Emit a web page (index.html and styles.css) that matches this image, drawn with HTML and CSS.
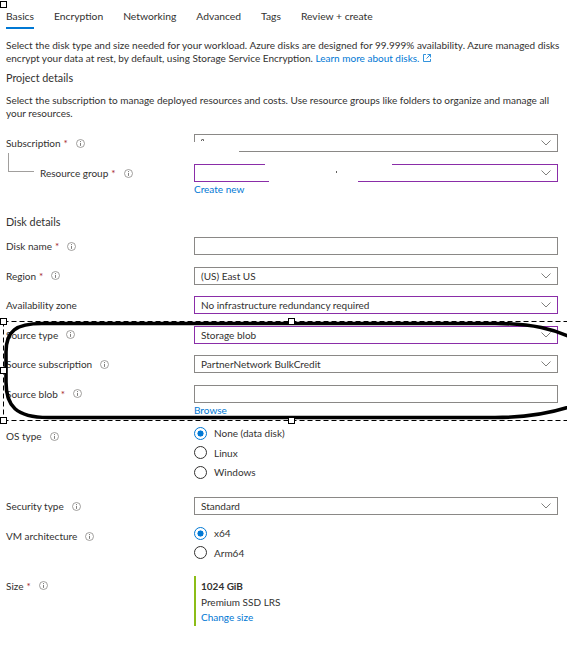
FILE: index.html
```html
<!DOCTYPE html>
<html lang="en">
<head>
<meta charset="utf-8">
<title>Create a managed disk</title>
<link rel="stylesheet" href="styles.css">
</head>
<body>
<div class="corner-handle"></div>
<main class="page">
  <nav class="tabs">
    <span class="tab active">Basics</span>
    <span class="tab">Encryption</span>
    <span class="tab">Networking</span>
    <span class="tab">Advanced</span>
    <span class="tab">Tags</span>
    <span class="tab">Review + create</span>
  </nav>

  <p class="desc first">Select the disk type and size needed for your workload. Azure disks are designed for 99.999% availability. Azure managed disks encrypt your data at rest, by default, using Storage Service Encryption. <a class="link" href="#">Learn more about disks. <svg class="ext" width="8" height="8" viewBox="0 0 8 8"><path d="M3 0.5H0.5V7.5H7.5V5M4.5 0.5H7.5V3.5M7.5 0.5L3.5 4.5" fill="none" stroke="#0078d4" stroke-width="0.8"/></svg></a></p>

  <h2 class="section">Project details</h2>
  <p class="desc second">Select the subscription to manage deployed resources and costs. Use resource groups like folders to organize and manage all your resources.</p>

  <div class="row row-sub">
    <div class="label">Subscription<span class="req">*</span><svg class="info" width="9" height="9" viewBox="0 0 9 9"><circle cx="4.5" cy="4.5" r="4" fill="none" stroke="#8a8886" stroke-width="0.8"/><path d="M4.5 3.9V6.9" stroke="#605e5c" stroke-width="0.8"/><circle cx="4.5" cy="2.6" r="0.5" fill="#605e5c"/></svg></div>
    <div class="field">
      <div class="select">
        <span class="value"></span>
        <svg class="chev" width="10" height="6" viewBox="0 0 10 6"><path d="M0.5 0.5L5 5L9.5 0.5" fill="none" stroke="#605e5c" stroke-width="0.8"/></svg>
        <span class="redact sub-a"></span>
        <span class="glyph-mark"></span>
      </div>
    </div>
  </div>

  <div class="row row-rg">
    <div class="label nested">Resource group<span class="req">*</span><svg class="info" width="9" height="9" viewBox="0 0 9 9"><circle cx="4.5" cy="4.5" r="4" fill="none" stroke="#8a8886" stroke-width="0.8"/><path d="M4.5 3.9V6.9" stroke="#605e5c" stroke-width="0.8"/><circle cx="4.5" cy="2.6" r="0.5" fill="#605e5c"/></svg></div>
    <div class="field">
      <div class="select focus">
        <span class="value"></span>
        <svg class="chev" width="10" height="6" viewBox="0 0 10 6"><path d="M0.5 0.5L5 5L9.5 0.5" fill="none" stroke="#605e5c" stroke-width="0.8"/></svg>
        <span class="redact rg-top"></span>
        <span class="redact rg-bottom"></span>
        <span class="rg-dot"></span>
      </div>
      <a class="link below" href="#">Create new</a>
    </div>
  </div>

  <h2 class="section disk">Disk details</h2>

  <div class="row row-first">
    <div class="label">Disk name<span class="req">*</span><svg class="info" width="9" height="9" viewBox="0 0 9 9"><circle cx="4.5" cy="4.5" r="4" fill="none" stroke="#8a8886" stroke-width="0.8"/><path d="M4.5 3.9V6.9" stroke="#605e5c" stroke-width="0.8"/><circle cx="4.5" cy="2.6" r="0.5" fill="#605e5c"/></svg></div>
    <div class="field"><div class="input"></div></div>
  </div>

  <div class="row">
    <div class="label">Region<span class="req">*</span><svg class="info" width="9" height="9" viewBox="0 0 9 9"><circle cx="4.5" cy="4.5" r="4" fill="none" stroke="#8a8886" stroke-width="0.8"/><path d="M4.5 3.9V6.9" stroke="#605e5c" stroke-width="0.8"/><circle cx="4.5" cy="2.6" r="0.5" fill="#605e5c"/></svg></div>
    <div class="field"><div class="select"><span class="value">(US) East US</span><svg class="chev" width="10" height="6" viewBox="0 0 10 6"><path d="M0.5 0.5L5 5L9.5 0.5" fill="none" stroke="#605e5c" stroke-width="0.8"/></svg></div></div>
  </div>

  <div class="row">
    <div class="label">Availability zone</div>
    <div class="field"><div class="select focus"><span class="value">No infrastructure redundancy required</span><svg class="chev" width="10" height="6" viewBox="0 0 10 6"><path d="M0.5 0.5L5 5L9.5 0.5" fill="none" stroke="#605e5c" stroke-width="0.8"/></svg></div></div>
  </div>

  <div class="row">
    <div class="label">Source type<svg class="info" width="9" height="9" viewBox="0 0 9 9"><circle cx="4.5" cy="4.5" r="4" fill="none" stroke="#8a8886" stroke-width="0.8"/><path d="M4.5 3.9V6.9" stroke="#605e5c" stroke-width="0.8"/><circle cx="4.5" cy="2.6" r="0.5" fill="#605e5c"/></svg></div>
    <div class="field"><div class="select focus"><span class="value">Storage blob</span><svg class="chev" width="10" height="6" viewBox="0 0 10 6"><path d="M0.5 0.5L5 5L9.5 0.5" fill="none" stroke="#605e5c" stroke-width="0.8"/></svg></div></div>
  </div>

  <div class="row">
    <div class="label">Source subscription<svg class="info" width="9" height="9" viewBox="0 0 9 9"><circle cx="4.5" cy="4.5" r="4" fill="none" stroke="#8a8886" stroke-width="0.8"/><path d="M4.5 3.9V6.9" stroke="#605e5c" stroke-width="0.8"/><circle cx="4.5" cy="2.6" r="0.5" fill="#605e5c"/></svg></div>
    <div class="field"><div class="select"><span class="value">PartnerNetwork BulkCredit</span><svg class="chev" width="10" height="6" viewBox="0 0 10 6"><path d="M0.5 0.5L5 5L9.5 0.5" fill="none" stroke="#605e5c" stroke-width="0.8"/></svg></div></div>
  </div>

  <div class="row">
    <div class="label">Source blob<span class="req">*</span><svg class="info" width="9" height="9" viewBox="0 0 9 9"><circle cx="4.5" cy="4.5" r="4" fill="none" stroke="#8a8886" stroke-width="0.8"/><path d="M4.5 3.9V6.9" stroke="#605e5c" stroke-width="0.8"/><circle cx="4.5" cy="2.6" r="0.5" fill="#605e5c"/></svg></div>
    <div class="field"><div class="input"></div><a class="link below" href="#">Browse</a></div>
  </div>

  <div class="row row-radio os">
    <div class="label top">OS type<svg class="info" width="9" height="9" viewBox="0 0 9 9"><circle cx="4.5" cy="4.5" r="4" fill="none" stroke="#8a8886" stroke-width="0.8"/><path d="M4.5 3.9V6.9" stroke="#605e5c" stroke-width="0.8"/><circle cx="4.5" cy="2.6" r="0.5" fill="#605e5c"/></svg></div>
    <div class="field radios">
      <div class="radio checked"><span class="dot"></span>None (data disk)</div>
      <div class="radio"><span class="dot"></span>Linux</div>
      <div class="radio"><span class="dot"></span>Windows</div>
    </div>
  </div>

  <div class="row row-sec">
    <div class="label">Security type<svg class="info" width="9" height="9" viewBox="0 0 9 9"><circle cx="4.5" cy="4.5" r="4" fill="none" stroke="#8a8886" stroke-width="0.8"/><path d="M4.5 3.9V6.9" stroke="#605e5c" stroke-width="0.8"/><circle cx="4.5" cy="2.6" r="0.5" fill="#605e5c"/></svg></div>
    <div class="field"><div class="select"><span class="value">Standard</span><svg class="chev" width="10" height="6" viewBox="0 0 10 6"><path d="M0.5 0.5L5 5L9.5 0.5" fill="none" stroke="#605e5c" stroke-width="0.8"/></svg></div></div>
  </div>

  <div class="row row-radio vm">
    <div class="label top">VM architecture<svg class="info" width="9" height="9" viewBox="0 0 9 9"><circle cx="4.5" cy="4.5" r="4" fill="none" stroke="#8a8886" stroke-width="0.8"/><path d="M4.5 3.9V6.9" stroke="#605e5c" stroke-width="0.8"/><circle cx="4.5" cy="2.6" r="0.5" fill="#605e5c"/></svg></div>
    <div class="field radios">
      <div class="radio checked"><span class="dot"></span>x64</div>
      <div class="radio"><span class="dot"></span>Arm64</div>
    </div>
  </div>

  <div class="row row-size">
    <div class="label top size-label">Size<span class="req">*</span><svg class="info" width="9" height="9" viewBox="0 0 9 9"><circle cx="4.5" cy="4.5" r="4" fill="none" stroke="#8a8886" stroke-width="0.8"/><path d="M4.5 3.9V6.9" stroke="#605e5c" stroke-width="0.8"/><circle cx="4.5" cy="2.6" r="0.5" fill="#605e5c"/></svg></div>
    <div class="field">
      <div class="size-card">
        <div class="size-amount">1024 GiB</div>
        <div class="size-sku">Premium SSD LRS</div>
        <a class="link size-change" href="#">Change size</a>
      </div>
    </div>
  </div>
</main>

<svg class="annotation" width="567" height="646" viewBox="0 0 567 646">
  <g fill="none" stroke="#000" stroke-width="1" stroke-dasharray="5 3">
    <path d="M3.5 321.5H567"/>
    <path d="M3.5 420.5H567"/>
    <path d="M3.5 321.5V420.5"/>
  </g>
  <path d="M580 342 C555 328 530 323.5 495 323.5 L42 323.5 C16 323.5 6 331 6 352 L6 382 C6 406 16 417.5 48 417.5 L495 417.5 C530 417.5 555 413 580 403" fill="none" stroke="#000" stroke-width="3.6"/>
  <g fill="#fff" stroke="#000" stroke-width="1">
    <rect x="0.5" y="318.5" width="6" height="6"/>
    <rect x="288.5" y="318.5" width="6" height="6"/>
    <rect x="0.5" y="367.5" width="6" height="6"/>
    <rect x="0.5" y="417.5" width="6" height="6"/>
    <rect x="288.5" y="417.5" width="6" height="6"/>
  </g>
</svg>
</body>
</html>
```

FILE: styles.css
```css
* { box-sizing: border-box; }

html, body {
  margin: 0;
  padding: 0;
}

body {
  position: relative;
  width: 567px;
  height: 646px;
  overflow: hidden;
  background: #fff;
  color: #323130;
  font-family: Lato, "Open Sans", "DejaVu Sans", sans-serif;
  font-size: 10px;
}

.corner-handle {
  position: absolute;
  left: 0;
  top: 1px;
  width: 7px;
  height: 7px;
  border: 1px solid #000;
  background: #fff;
}

.page {
  padding: 0 3px 0 6px;
}

/* tabs */
.tabs {
  display: flex;
  gap: 20px;
  height: 29px;
  font-size: 10.3px;
}

.tab {
  padding-top: 9px;
  padding-bottom: 4px;
  line-height: 14px;
  border-bottom: 2px solid transparent;
  white-space: nowrap;
}

.tab.active {
  border-bottom-color: #0078d4;
}

/* text */
.desc {
  margin: 0;
  line-height: 13px;
}

.desc.first { margin-top: 9.5px; }
.desc.second {
  margin-top: 7.5px;
  max-width: 552px;
}

.section {
  margin: 5.5px 0 0;
  font-size: 10.8px;
  font-weight: 400;
  line-height: 16px;
}

.section.disk { margin-top: 16.5px; }

.link {
  color: #0078d4;
  text-decoration: none;
}

.ext {
  vertical-align: -0.5px;
  margin-left: 1px;
}

/* rows */
.row {
  display: grid;
  grid-template-columns: 188px 364px;
  align-items: start;
  margin-top: 11.6px;
}

.row-sub { margin-top: 14.5px; }
.row-rg { margin-top: 12px; }
.row-first { margin-top: 7.5px; }
.row-radio.os { margin-top: 5.5px; }
.row-sec { margin-top: 15.3px; }
.row-radio.vm { margin-top: 8.2px; }
.row-size { margin-top: 13.2px; }

.label {
  position: relative;
  display: flex;
  align-items: center;
  height: 18px;
  white-space: nowrap;
}

.label.top {
  height: 16px;
  margin-top: 4.8px;
}

.label.size-label { margin-top: 2px; }

.req {
  color: #a4262c;
  margin-left: 3px;
}

.info {
  margin-left: 8px;
  flex: none;
}

.label.nested {
  padding-left: 34px;
}

.label.nested::before {
  content: "";
  position: absolute;
  left: 2px;
  top: -11px;
  width: 25px;
  height: 18px;
  border-left: 1px solid #a19f9d;
  border-bottom: 1px solid #a19f9d;
}

.field {
  display: flex;
  flex-direction: column;
  align-items: flex-start;
}

.select,
.input {
  position: relative;
  width: 364px;
  height: 18px;
  border: 1px solid #8a8886;
  background: #fff;
}

.select {
  display: flex;
  align-items: center;
  justify-content: space-between;
  padding: 0 6px 0 6px;
}

.select.focus {
  border-color: #8a2da8;
}

.value {
  line-height: 16px;
  white-space: nowrap;
}

.chev {
  flex: none;
}

.below {
  line-height: 15px;
}

/* redactions over the resource names */
.redact {
  position: absolute;
  background: #fff;
}

.redact.sub-a {
  left: -2px;
  top: 7px;
  width: 46px;
  height: 13px;
}

.glyph-mark {
  position: absolute;
  left: 6px;
  top: 4px;
  width: 3px;
  height: 2px;
  border: 1px solid #605e5c;
  border-bottom: none;
  border-radius: 2px 2px 0 0;
}

.redact.rg-top {
  left: 70px;
  top: -2px;
  width: 127px;
  height: 4px;
}

.redact.rg-bottom {
  left: 74px;
  top: 15px;
  width: 89px;
  height: 5px;
}

.rg-dot {
  position: absolute;
  left: 141px;
  top: 6px;
  width: 1px;
  height: 2px;
  background: #605e5c;
}

/* radios */
.radios {
  display: flex;
  flex-direction: column;
}

.radio {
  display: flex;
  align-items: center;
  gap: 7px;
  height: 19.5px;
  line-height: 16px;
}

.dot {
  width: 13px;
  height: 13px;
  border-radius: 50%;
  border: 1px solid #323130;
  background: #fff;
  flex: none;
}

.radio.checked .dot {
  border-color: #0078d4;
  background: radial-gradient(circle at center, #0078d4 0 2.8px, #fff 3.3px);
}

/* size */
.size-card {
  border-left: 2px solid #8cbd18;
  padding: 2px 0 1px 5px;
}

.size-amount {
  font-weight: 700;
  line-height: 16px;
}

.size-sku {
  line-height: 16px;
}

.size-change {
  display: block;
  line-height: 15px;
}

/* screenshot annotation drawn over the form */
.annotation {
  position: absolute;
  left: 0;
  top: 0;
  pointer-events: none;
}
```
